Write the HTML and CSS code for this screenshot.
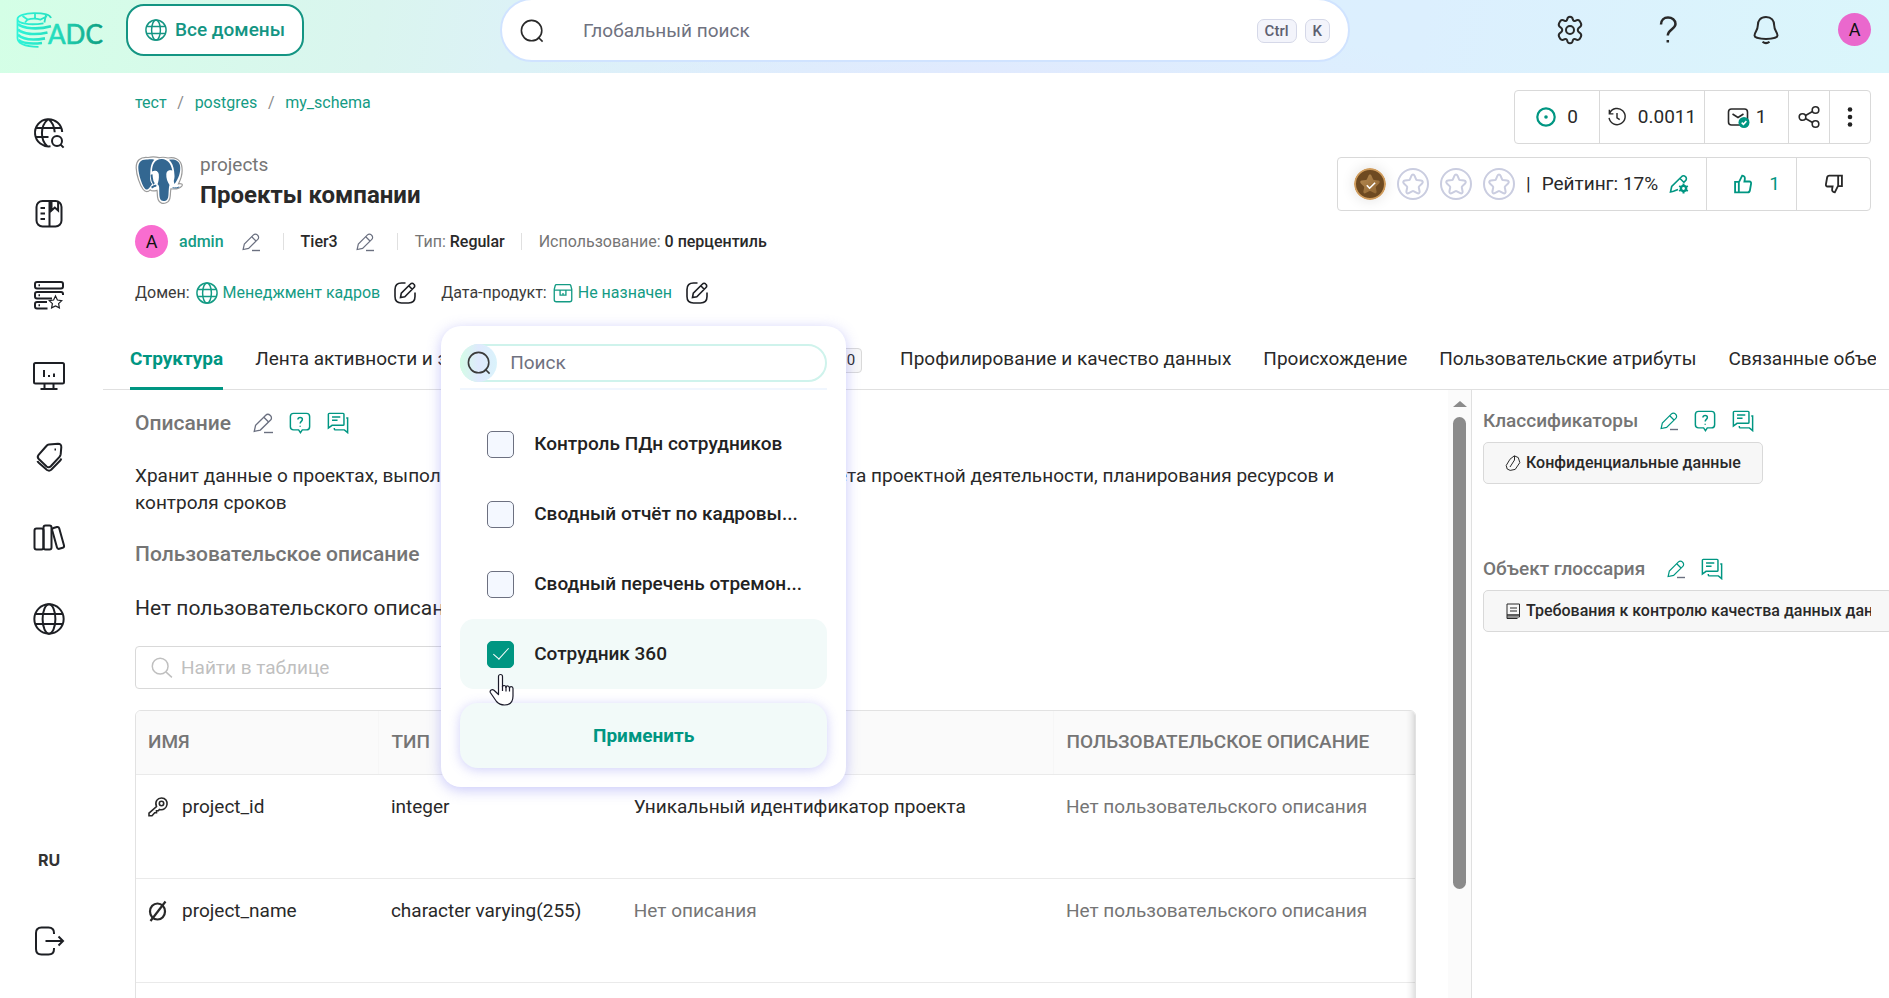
FILE: index.html
```html
<!DOCTYPE html>
<html lang="ru">
<head>
<meta charset="utf-8">
<title>Проекты компании</title>
<link rel="stylesheet" href="styles.css">
</head>
<body>
<svg class="sprite" aria-hidden="true">
  <symbol id="i-globe" viewBox="0 0 24 24"><circle cx="12" cy="12" r="11"/><ellipse cx="12" cy="12" rx="4.8" ry="11"/><path d="M1.8 8.2h20.4M1.8 15.8h20.4"/></symbol>
  <symbol id="i-search" viewBox="0 0 24 24"><circle cx="11.6" cy="11.6" r="10.2"/><path d="M18 18l4.6 4.6"/></symbol>
  <symbol id="i-find" viewBox="0 0 24 24"><circle cx="10" cy="10" r="8.600"/><path d="M16.200 16.200l6.600 6"/></symbol>
  <symbol id="i-pencil" viewBox="0 0 24 24"><path d="M1.5 22l1.6-7.2L15.3 2.6a3.6 3.6 0 0 1 5.1 0l.7.7a3.6 3.6 0 0 1 0 5.1L8.8 20.5z"/><path d="M13 5l5.700 5.700"/></symbol>
  <symbol id="i-edit" viewBox="0 0 24 24"><path d="M12.5 2H8.5Q2 2 2 8.500v7q0 6.500 6.500 6.500h7q6.500 0 6.500-6.500v-4"/><path d="M7.500 16.500l.8-4.300L17.500 3a2.200 2.200 0 0 1 3.200 0l.3.3a2.200 2.200 0 0 1 0 3.200L11.800 15.700zM16 5l3.200 3.200"/></symbol>
  <symbol id="i-ask" viewBox="0 0 24 24"><path d="M5 1.500h14q3.500 0 3.500 3.500v11q0 3.500-3.500 3.500h-4.500L12.500 22.500l-2-3H5q-3.500 0-3.500-3.500V5q0-3.500 3.500-3.500z"/><path d="M9.700 8.200c.2-3 4.900-3 4.900 0 0 2-2.400 2-2.400 4.300M12.200 15v1.200"/></symbol>
  <symbol id="i-chat" viewBox="0 0 24 24"><path d="M1.500 17.500V2.500q0-1 1-1h15q1 0 1 1v11q0 1-1 1h-12zM5.500 5.500h9M5.500 9h6M21 6.500h1.500v16l-3.500-3H9q-1 0-1-1v-1"/></symbol>
  <symbol id="i-box" viewBox="0 0 24 24"><path d="M4 2h16q1 0 1.300 1l1.200 4.500V20q0 2.500-2.500 2.500H4Q1.500 22.500 1.500 20V7.500L2.700 3Q3 2 4 2zM1.500 8.500h21M8.500 8.500v6h7v-6M12 12v2.500"/></symbol>
  <symbol id="i-star" viewBox="0 0 32 32"><path stroke-linejoin="round" d="M16 6.500c.8 0 1.200.5 1.500 1.200l1.600 3.600c.2.500.5.700 1 .8l4 .5c1.700.2 2.200 1.700 1 2.900l-3 2.900c-.3.300-.4.700-.3 1.100l.8 4c.2 1.500-1 2.400-2.300 1.600l-3.400-1.800q-.9-.4-1.800 0l-3.400 1.800c-1.300.8-2.500-.1-2.300-1.600l.8-4c.1-.4 0-.8-.3-1.100l-3-2.900c-1.200-1.200-.7-2.700 1-2.900l4-.5c.5-.1.800-.3 1-.8l1.600-3.600c.3-.7.700-1.200 1.500-1.200z"/></symbol>
  <symbol id="i-medal" viewBox="0 0 32 32"><circle cx="16" cy="16" r="15"/><use href="#i-star"/></symbol>
  <symbol id="i-thumb" viewBox="0 0 24 24"><path d="M2.500 9.500h4.500v12.500h-4.500zM7 10l4-8c2.600.3 3.600 2 3.200 4.200l-.5 2.800h6q2.300.2 2 2.500l-1.400 8q-.4 2.500-2.800 2.500H7"/></symbol>
</svg>

<header class="topbar">
  <a class="logo" href="#" aria-label="ADC">
    <svg class="logo-art" viewBox="0 0 88 37">
      <defs><linearGradient id="lg" x1="0" y1="0" x2="88" y2="0" gradientUnits="userSpaceOnUse"><stop offset="0" stop-color="#2ff5da"/><stop offset=".45" stop-color="#25dcbc"/><stop offset="1" stop-color="#0d9b7e"/></linearGradient></defs>
      <g fill="none" stroke="url(#lg)" stroke-width="1.800">
        <path d="M1.500 7C1.500 3.500 9 1.200 18 1.200c9.500 0 16 1.800 17 4.800M1.500 7v19c0 5 6 8.500 21 8.800M1.500 7c0 4.500 12 6.500 26 4.300"/>
        <path d="M6.500 4l5 3.600M19 1v6M30 2.500l-1.600 8M11.500 7.600c4-1.200 9-1.200 13 0L31 4.200M11.500 7.600L9 10.500"/>
      </g>
      <g fill="none" stroke="url(#lg)" stroke-width="2.600">
        <path d="M2 12c5 4.800 20 5.800 33 2.200M2 17.500c5 4.800 17 5.800 29.500 3M2 22.800c5 4.800 16 5.600 27 3.600M2.500 28c5 3.800 13 4.200 23.500 3"/>
      </g>
      <text x="32" y="32" font-family="Lato, sans-serif" font-size="26" fill="url(#lg)" stroke="url(#lg)" stroke-width=".6">ADC</text>
    </svg>
  </a>
  <button class="domains"><svg class="ic i22"><use href="#i-globe"/></svg>Все домены</button>
  <label class="global-search">
    <svg class="ic i24"><use href="#i-search"/></svg>
    <input type="search" placeholder="Глобальный поиск" aria-label="Глобальный поиск">
    <kbd>Ctrl</kbd><kbd>K</kbd>
  </label>
  <nav class="top-actions">
    <button aria-label="Настройки"><svg class="ic i30" viewBox="0 0 30 30"><circle cx="15" cy="15" r="4"/><path d="M12.200 4.500q.3-2.800 2.800-2.800t2.800 2.800q.6 2 2.600 1.300 2.800-1.600 4.300.3l1.300 2.300q.9 2.200-1.300 3.800-2 1.300-2 2.800t2 2.800q2.200 1.600 1.300 3.800l-1.300 2.300q-1.500 1.900-4.300.3-2-.7-2.600 1.300-.3 2.800-2.800 2.800t-2.800-2.800q-.6-2-2.600-1.300-2.800 1.600-4.300-.3L4 21.600q-.9-2.200 1.300-3.800 2-1.300 2-2.800t-2-2.800Q3.100 10.600 4 8.400l1.300-2.300q1.500-1.900 4.300-.3 2 .7 2.600-1.300z"/></svg></button>
    <button aria-label="Справка"><svg class="ic i30 help" viewBox="0 0 30 30"><path d="M8 9.500C8 5 11 2.500 15 2.500s7.500 2.500 7.500 6.500c0 5-7.700 5.500-7.700 11.500M14.800 25v2.600"/></svg></button>
    <button aria-label="Уведомления"><svg class="ic i30" viewBox="0 0 30 30"><path d="M15 2c-5.500 0-8.200 3.700-8.200 8.500 0 5-3.300 6.500-3.300 10 0 2 5 3.400 11.500 3.400s11.500-1.400 11.500-3.400c0-3.500-3.300-5-3.300-10C23.200 5.700 20.500 2 15 2zM11.500 26.700q3.500 2.800 7 0"/></svg></button>
    <button class="avatar" aria-label="Профиль">A</button>
  </nav>
</header>

<div class="shell">
  <nav class="sidebar">
    <a href="#" aria-label="Обзор"><svg class="ic i32" viewBox="0 0 32 32"><path d="M17.500 29.300A13.600 13.600 0 1 1 29.200 15M14.500 29.500C7 23 7 9 15 2.200M15.500 2.200c4 3 6 8 6.200 13M14 29.500h1M3 11h25.500M2.500 20h13"/><circle cx="24" cy="24" r="5"/><path d="M27.600 27.600l3 3"/></svg></a>
    <a href="#" aria-label="Каталог"><svg class="ic i32" viewBox="0 0 32 32"><rect x="3.500" y="3" width="25" height="25.500" rx="6"/><path d="M16.500 3v25M7.500 10h4.500M7.500 15.500h4.500M7.500 21h4.500M18.500 3.500v9l3.300-3 3.300 3V4"/></svg></a>
    <a href="#" aria-label="Качество"><svg class="ic i32" viewBox="0 0 32 32"><rect x="2" y="3" width="28" height="6.500" rx="2"/><path d="M19 19.500H4q-2 0-2-2v-2.500q0-2 2-2h24q2 0 2 2v1M14.500 29.500H4q-2 0-2-2V25q0-2 2-2h10M5.500 6.300h1.500M5.500 16.300h1.500M5.500 26.300h1.500"/><path class="thin" d="M22.500 17l1.900 4 4.300.6-3.100 3 .8 4.300-3.900-2-3.900 2 .8-4.300-3.100-3 4.300-.6z"/></svg></a>
    <a href="#" aria-label="Дашборды"><svg class="ic i32" viewBox="0 0 32 32"><rect x="1" y="3" width="30" height="20.500" rx="1.500"/><path d="M11.500 23.500v5M20.500 23.500v5M7.500 29h17M11 10v7M16 15v2M21 13.500v3.500"/></svg></a>
    <a href="#" aria-label="Теги"><svg class="ic i32" viewBox="0 0 32 32"><path d="M16 3.500l9-.8q3.500 0 3.300 3.500l-.6 7q-.2 1.500-1.200 2.600l-8.700 9.400q-2 2-4.200.2L5.800 18q-2-2-.2-4.200L13.400 5q1.100-1.300 2.600-1.500zM21.500 8.500h1.500M4.500 20q.3 1 1.500 2l8 7q2.200 1.400 4.200-.2l8.800-9q1-1 1.200-2.300"/></svg></a>
    <a href="#" aria-label="Глоссарий"><svg class="ic i32" viewBox="0 0 32 32"><rect x="1.500" y="6.500" width="9" height="21" rx="2"/><rect x="10.500" y="3.500" width="8" height="24" rx="2"/><path d="M19.200 8.200q-.4-1.700 1.300-2.200l3.400-1q1.800-.4 2.300 1.300L31 23.500q.4 1.800-1.300 2.300l-3.400 1q-1.800.4-2.300-1.300z"/></svg></a>
    <a href="#" aria-label="Домены"><svg class="ic i32 fine"><use href="#i-globe"/></svg></a>
    <button class="lang">RU</button>
    <a href="#" aria-label="Выход"><svg class="ic i32" viewBox="0 0 32 32"><path d="M21 9V8q0-5.500-5.500-5.500H8.500Q3 2.500 3 8v16q0 5.500 5.500 5.500h7Q21 29.500 21 24v-1M12.500 16H30M25.500 11.500L30 16l-4.500 4.500"/></svg></a>
  </nav>

  <main class="main">
    <section class="head">
      <div class="info">
        <nav class="crumbs"><a href="#">тест</a><i>/</i><a href="#">postgres</a><i>/</i><a href="#">my_schema</a></nav>
        <div class="title-row">
          <svg class="pg" viewBox="0 0 48 48">
            <path d="M13 1.500C5 .5 1 5 1.200 12c.2 7 3.500 17 7 21.500 2.200 2.800 5 2.500 7 .3 1 1 3.600 1.400 6.800.5.600 3-.2 6 1.200 9.500 1.300 3.500 4.800 4.200 8 3 2.700-1 3.800-3.200 4-6.500.3-2.600.2-5 .7-7.500 4.600.6 9.100-.5 11.100-3 1-1.600-.5-2.400-3.500-2C46.500 22 48 15 46.500 9 45 3 39 .8 33 2c-5-1.500-7-.5-9-.3-3-.8-7-1-11-.2z" fill="#fff" stroke="#9b9b9b" stroke-width="1.200"/>
            <path d="M13 3.500C6.500 2.700 3.200 6 3.300 12c.2 6 3.200 16 6.300 20.300 1.500 2 3.200 1.300 5-.9l2.600-3.300C14.500 25.500 15 20.500 15.300 17c.2-6 1-10 4-13.200-2-.5-4-.6-6.300-.3z" fill="#336791"/>
            <path d="M27 3c-6.500-.3-10 5-10 12.500 3-1.700 6.500-.5 6.800 2.800.4 4-.3 7.500-1.300 10 2 1 1.800 4.500 1.800 8 0 6 1 9.300 5.200 8.700 3.500-.5 3.800-3.500 4-6.700.3-4 .2-7 1-9.300-2-3-3.500-7-3.200-11 .2-3 2.500-4.500 6-3.500C36 7.500 32.500 3.300 27 3z" fill="#336791"/>
            <path d="M34 3.700c5.500-.9 10 .8 11 5.800 1.100 6-1.500 13.500-5.500 18.500-.7-2-1-3-.2-5.200.6-2.600-.1-5-.2-7.500C38.700 10.700 37 6.300 34 3.700z" fill="#336791"/>
            <path d="M16.500 18.500c.5 3.500 0 6.500 2.500 9.500M16.500 31.500c2-1 3-2 4.800-1.600" fill="none" stroke="#336791" stroke-width="2"/>
            <path d="M37.500 31.800c3 .3 5.200 0 6.700-.9" stroke="#336791" stroke-width="1" fill="none"/>
            <path d="M20 15.300l2 .6M34 15.300l1.800-.3" stroke="#fff" stroke-width="1.200"/>
          </svg>
          <div><p class="tech">projects</p><h1>Проекты компании</h1></div>
        </div>
        <div class="meta">
          <span class="avatar pink">A</span><a class="owner" href="#">admin</a>
          <button class="pen" aria-label="Изменить владельца"><svg class="ic i18 grey"><use href="#i-pencil"/><path class="uline" d="M10 17.500h8"/></svg></button>
          <span class="sep"></span><b class="tier">Tier3</b>
          <button class="pen" aria-label="Изменить уровень"><svg class="ic i18 grey"><use href="#i-pencil"/><path class="uline" d="M10 17.500h8"/></svg></button>
          <span class="sep"></span><span class="stat">Тип: <b>Regular</b></span>
          <span class="sep"></span><span class="stat">Использование: <b>0 перцентиль</b></span>
        </div>
        <div class="assign">
          <div class="field">Домен:<a href="#"><svg class="ic i22"><use href="#i-globe"/></svg>Менеджмент кадров</a><button aria-label="Изменить домен"><svg class="ic i24"><use href="#i-edit"/></svg></button></div>
          <div class="field">Дата-продукт:<a href="#"><svg class="ic i20"><use href="#i-box"/></svg>Не назначен</a><button aria-label="Изменить дата-продукт"><svg class="ic i24"><use href="#i-edit"/></svg></button>
            <form class="popup">
              <label class="popup-search"><span class="lens"><svg class="ic i24"><use href="#i-search"/></svg></span><input type="search" placeholder="Поиск" aria-label="Поиск"></label>
              <div class="options">
                <label class="option"><input type="checkbox">Контроль ПДн сотрудников</label>
                <label class="option"><input type="checkbox">Сводный отчёт по кадровы...</label>
                <label class="option"><input type="checkbox">Сводный перечень отремон...</label>
                <label class="option on"><input type="checkbox" checked>Сотрудник 360</label>
              </div>
              <button type="button" class="apply">Применить</button>
              <svg class="hand" viewBox="0 0 26 33"><path d="M10.500 21.500V3.500a2 2 0 0 1 4 0V14c0-2.200 3.500-2 3.500.5 0-2.300 3.500-2 3.500.7 0-2.200 3.500-2.200 3.500.3v7.500c0 6-3 9-8.500 9-4 0-6-1.200-8-3.500l-6.200-9c-.8-2 1.700-3.800 3.700-2.300z" fill="#fff" stroke="#1b1b2a" stroke-width="1.200" stroke-linejoin="round"/><path d="M14.500 13v5M18 13.500v5M21.500 14.500v4" stroke="#1b1b2a" stroke-width="1.200"/></svg>
            </form>
          </div>
        </div>
      </div>
      <div class="actions">
        <div class="group">
          <button class="c1"><svg class="ic i20 green bold" viewBox="0 0 20 20"><circle cx="10" cy="10" r="8.700"/><circle class="dot" cx="10" cy="10" r="1.800"/></svg>0</button>
          <button class="c2"><svg class="ic i18" viewBox="0 0 20 20"><path d="M2 5.500A9 9 0 1 1 1.200 11M1.500 2v4.500H6M10 5.500V11l3 2"/></svg>0.0011</button>
          <button class="c1 tight"><svg class="ic i22" viewBox="0 0 22 22"><rect x="1.500" y="3" width="19" height="16" rx="3"/><path d="M5.500 8l5.500 3.500L16.500 8"/><circle cx="17" cy="16.500" r="5.500" fill="#009682" stroke="none"/><path d="M14.700 16.700l1.700 1.600 3-3.200" stroke="#fff"/></svg>1</button>
          <button class="c3" aria-label="Поделиться"><svg class="ic i22" viewBox="0 0 22 22"><circle cx="4.500" cy="11" r="3.300"/><circle cx="17.500" cy="4" r="3.300"/><circle cx="17.500" cy="18" r="3.300"/><path d="M7.500 9.500l7-4M7.500 12.500l7 4"/></svg></button>
          <button class="c3" aria-label="Ещё"><svg class="i22" viewBox="0 0 22 22" fill="#222"><circle cx="11" cy="3.500" r="2.300"/><circle cx="11" cy="11" r="2.300"/><circle cx="11" cy="18.500" r="2.300"/></svg></button>
        </div>
        <div class="group">
          <div class="rating">
            <svg class="medal i32 earned" viewBox="0 0 32 32"><defs><linearGradient id="st" x1="0" y1="0" x2="1" y2="1"><stop offset="0" stop-color="#b58a52"/><stop offset="1" stop-color="#8f6430"/></linearGradient></defs><circle cx="16" cy="16" r="15" fill="#6e4a21" stroke="#cf9c5d" stroke-width="2"/><g fill="url(#st)" stroke="none"><use href="#i-star"/></g><path d="M12.800 17.200l2.800 3 5.500-5.500" fill="none" stroke="#fff" stroke-width="1.600"/></svg>
            <svg class="medal i32"><use href="#i-medal"/></svg>
            <svg class="medal i32"><use href="#i-medal"/></svg>
            <svg class="medal i32"><use href="#i-medal"/></svg>
            <span>|</span><span>Рейтинг: 17%</span>
            <svg class="ic i20 green" viewBox="0 0 20 20"><path d="M9 15.500l-4.500 1.800L1.500 18l1.200-5.500L12.500 2.700a2.700 2.700 0 0 1 4 0 2.700 2.700 0 0 1 0 4l-2 2M11 4.500l4 4"/><circle cx="14.500" cy="14.500" r="2.600" stroke-width="2.400"/><path stroke-width="2" d="M14.500 9.500v2M14.500 17.500v2M10.200 12l1.700 1M17.100 16l1.700 1M10.200 17l1.700-1M17.100 13l1.700-1"/></svg>
          </div>
          <button class="like"><svg class="ic i20 bold"><use href="#i-thumb"/></svg>1</button>
          <button class="dislike" aria-label="Не нравится"><svg class="ic i20 bold"><use href="#i-thumb" transform="rotate(180 10 10)"/></svg></button>
        </div>
      </div>
    </section>

    <nav class="tabs">
      <a class="tab active" href="#">Структура</a>
      <a class="tab" href="#">Лента активности и задачи <span class="count">0</span></a>
      <a class="tab" href="#">Примеры данных</a>
      <a class="tab queries" href="#">Запросы <span class="count">0</span></a>
      <a class="tab" href="#">Профилирование и качество данных</a>
      <a class="tab" href="#">Происхождение</a>
      <a class="tab" href="#">Пользовательские атрибуты</a>
      <a class="tab" href="#">Связанные объекты</a>
    </nav>

    <div class="body">
      <section class="content">
        <div class="sect"><h2>Описание</h2>
          <button aria-label="Изменить описание"><svg class="ic i20 grey"><use href="#i-pencil"/><path class="uline" d="M11 19.500h9"/></svg></button>
          <button aria-label="Запросить описание"><svg class="ic i22 green"><use href="#i-ask"/></svg></button>
          <button aria-label="Обсуждение"><svg class="ic i22 green"><use href="#i-chat"/></svg></button></div>
        <p class="text">Хранит данные о проектах, выполняемых в компании. Используется для расчёта проектной деятельности, планирования ресурсов и контроля сроков</p>
        <div class="sect"><h2>Пользовательское описание</h2><button aria-label="Изменить пользовательское описание"><svg class="ic i20 grey"><use href="#i-pencil"/><path class="uline" d="M11 19.500h9"/></svg></button></div>
        <p class="empty">Нет пользовательского описания</p>
        <label class="finder"><svg class="ic i22"><use href="#i-find"/></svg><input type="search" placeholder="Найти в таблице" aria-label="Найти в таблице"></label>
        <div class="table-wrap">
          <table>
            <colgroup><col class="w-name"><col class="w-type"><col class="w-desc"><col class="w-user"></colgroup>
            <thead><tr><th>ИМЯ</th><th>ТИП</th><th>ОПИСАНИЕ</th><th>ПОЛЬЗОВАТЕЛЬСКОЕ ОПИСАНИЕ</th></tr></thead>
            <tbody>
              <tr><td><span class="cell"><svg class="ic i20" viewBox="0 0 20 20"><path d="M8.500 9.500C6.500 4.500 9.500 1 13.500 1S19.500 4 19 7.500c-.5 3.500-3.500 6-7.500 5l-1.200 1.300H8.500v2H6.700L4 18.800H1v-2.700z"/><circle cx="13.500" cy="6.500" r="2.200"/></svg>project_id</span></td><td>integer</td><td>Уникальный идентификатор проекта</td><td class="muted">Нет пользовательского описания</td></tr>
              <tr><td><span class="cell"><svg class="ic i20 bold" viewBox="0 0 20 20"><ellipse cx="9.500" cy="10.500" rx="7.500" ry="8"/><path d="M2.500 20L17.500.5"/></svg>project_name</span></td><td>character varying(255)</td><td class="muted">Нет описания</td><td class="muted">Нет пользовательского описания</td></tr>
              <tr><td></td><td></td><td></td><td></td></tr>
            </tbody>
          </table>
        </div>
      </section>
      <div class="scroll" aria-hidden="true"><span class="up"></span><span class="knob"></span></div>
      <aside class="side">
        <div class="sect"><h3>Классификаторы</h3>
          <button aria-label="Изменить классификаторы"><svg class="ic i18 green"><use href="#i-pencil"/><path class="uline" d="M10 17.500h8"/></svg></button>
          <button aria-label="Запросить классификаторы"><svg class="ic i22"><use href="#i-ask"/></svg></button>
          <button aria-label="Обсуждение"><svg class="ic i22"><use href="#i-chat"/></svg></button></div>
        <a class="tag" href="#"><svg class="ic i16" viewBox="0 0 16 16"><path d="M1.200 10.500L5 4.200 9.300.8l4 1.800 1.500 5-4.600 6.800-5 1-3-1.400zM9.500 1v4M5 12l4.500-7"/></svg>Конфиденциальные данные</a>
        <div class="sect second"><h3>Объект глоссария</h3>
          <button aria-label="Изменить глоссарий"><svg class="ic i18 green"><use href="#i-pencil"/><path class="uline" d="M10 17.500h8"/></svg></button>
          <button aria-label="Обсуждение"><svg class="ic i22"><use href="#i-chat"/></svg></button></div>
        <a class="tag long" href="#"><svg class="ic i16" viewBox="0 0 16 16"><path d="M2 1h12.500v13H2zM2 14v1.500h10.500M5 5h7M5 8h7"/><path d="M2 12h12" stroke-width="1.500"/></svg><span>Требования к контролю качества данных данных</span></a>
      </aside>
    </div>
  </main>
</div>
</body>
</html>
```
FILE: styles.css
```css
* { box-sizing: border-box; }
body {
  margin: 0;
  height: 100vh;
  display: flex;
  flex-direction: column;
  overflow: hidden;
  font-family: Roboto, "Liberation Sans", sans-serif;
  font-size: 19px;
  line-height: 24px;
  color: #292929;
  background: #fff;
}
h1, h2, h3, p { margin: 0; }
a { color: #149b84; text-decoration: none; }
button { font: inherit; color: inherit; background: none; border: 0; padding: 0; cursor: pointer; display: flex; align-items: center; justify-content: center; }
input { font: inherit; color: inherit; border: 0; outline: 0; background: none; padding: 0; min-width: 0; }
b { font-weight: 500; }
.sprite { position: absolute; width: 0; height: 0; }
.ic { fill: none; stroke: currentColor; stroke-width: 1.6; flex: none; overflow: visible; }
.bold { stroke-width: 2.2; }
.thin { stroke-width: 1.2; }
.i16 { width: 16px; height: 16px; stroke-width: 1; }
.i18 { width: 18px; height: 18px; }
.i20 { width: 20px; height: 20px; }
.i22 { width: 22px; height: 22px; }
.i24 { width: 24px; height: 24px; }
.i30 { width: 30px; height: 30px; stroke-width: 2; }
.i32 { width: 32px; height: 32px; stroke-width: 2; }
.help { stroke-width: 2.5; }
.fine { stroke-width: 1.5; }
.green { color: #009682; }
.grey { color: #6b7080; }
.uline { stroke: #6b7080; stroke-width: 1.4; }
.dot { fill: currentColor; stroke: none; }

.topbar {
  flex: none;
  display: flex;
  align-items: flex-start;
  padding-bottom: 11px;
  background: radial-gradient(ellipse 460px 60px at 52% 110%, #e1e9fe 0%, rgba(225, 233, 254, 0) 100%), linear-gradient(100deg, #d4ffe6 0%, #daf5ef 20%, #dcf2f6 27%, #dceffd 50%, #dceffe 75%, #daf6fb 100%);
}
.logo { margin: 12px 22px 0 16px; display: flex; }
.logo-art { width: 88px; height: 37px; overflow: visible; }
.domains { margin-top: 4px; width: 178px; height: 52px; gap: 8px; border: 2px solid #149583; border-radius: 18px; background: #fff; color: #149583; font-weight: 500; }
.global-search { margin-left: 196px; margin-top: -2px; flex: 1; height: 64px; display: flex; align-items: center; gap: 8px; padding: 2px 18px 0 18px; background: #fff; border: 2px solid #d0e3ff; border-radius: 32px; }
.global-search input { flex: 1; margin-left: 31px; }
.global-search input::placeholder, .popup-search input::placeholder { color: #6f7280; opacity: 1; }
kbd { font: 500 15px/22px Roboto, sans-serif; color: #5d6070; padding: 0 7px; border: 1px solid #d5d8e8; border-radius: 7px; background: #f3f4fb; }
.top-actions { flex: none; width: 539px; padding: 13px 18px 0 0; display: flex; justify-content: flex-end; gap: 68px; align-items: center; }
.avatar { width: 33px; height: 33px; flex: none; border-radius: 50%; background: #ea68cd; color: #111; font-size: 18px; }
.top-actions .avatar { margin-left: -11px; }
.avatar.pink { background: #f96dd0; display: flex; align-items: center; justify-content: center; }

.shell { flex: 1; min-height: 0; display: flex; }
.sidebar { flex: 0 0 98px; display: flex; flex-direction: column; align-items: center; gap: 49px; padding: 44px 0 41px; }
.sidebar a { color: #1d1f24; display: flex; }
.lang { margin-top: auto; height: 32px; font: 700 16px/32px Inter, sans-serif; color: #333; }
.main { flex: 1; min-width: 0; display: flex; flex-direction: column; }

.head { flex: none; display: flex; justify-content: space-between; padding: 17px 18px 25px 37px; }
.crumbs { display: flex; font-size: 16px; padding-top: 1px; }
.crumbs i { font-style: normal; color: #8a8a8a; width: 28px; text-align: center; }
.title-row { display: flex; gap: 17px; margin-top: 38px; }
.pg { width: 48px; height: 48px; margin-top: 3px; }
.tech { color: #757575; }
h1 { font-size: 24px; line-height: 36px; font-weight: 700; }
.meta { display: flex; align-items: center; margin-top: 12px; font-size: 16px; }
.owner { margin-left: 11px; font-weight: 500; }
.pen { margin: 0 23px 0 18px; }
.sep { width: 1px; height: 17px; background: #e0e0e0; margin-right: 17px; }
.stat { color: #757575; margin-right: 16px; }
.stat b { color: #292929; }
.assign { display: flex; gap: 24px; margin-top: 23px; font-size: 16px; }
.field { position: relative; display: flex; align-items: center; color: #3b3b3b; }
.field a { display: flex; align-items: center; gap: 5px; margin: 0 13px 0 6px; }
.field button { color: #1d1f24; }

.actions { display: flex; flex-direction: column; align-items: flex-end; gap: 13px; }
.group { display: flex; height: 54px; border: 1px solid #d9d9d9; border-radius: 4px; }
.group > * + * { border-left: 1px solid #d9d9d9; }
.c1 { width: 84px; gap: 11px; }
.c1.tight { gap: 7px; }
.c2 { width: 105px; gap: 12px; }
.c3 { width: 41px; }
.rating { display: flex; align-items: center; width: 368px; gap: 11px; padding-left: 16px; }
.medal { flex: none; fill: none; stroke: #cacde0; }
.medal.earned { border-radius: 50%; box-shadow: 0 0 14px rgba(0, 0, 0, .12); }
.like { width: 90px; gap: 16px; padding-left: 10px; color: #009682; }
.dislike { width: 74px; }

.popup { position: absolute; z-index: 2; top: 45px; left: 0; width: 405px; padding: 18px 19px 19px; border-radius: 20px; background: #fff; font-size: 19px; box-shadow: 0 3px 14px rgba(110, 110, 240, .38); }
.popup-search { display: flex; height: 38px; border: 2px solid #cff3ec; border-radius: 19px; margin-bottom: 6px; }
.lens { flex: none; width: 37px; height: 38px; margin: -2px 13px 0 -2px; border-radius: 50%; background: linear-gradient(90deg, #d4fde6, #dfe9fd 50%, #daf3fb); display: flex; align-items: center; justify-content: center; }
.popup-search input { flex: 1; }
.options { border-top: 2px solid #f0f6fe; padding-top: 19px; }
.option { display: flex; align-items: center; gap: 20px; height: 70px; padding-left: 27px; border-radius: 14px; font-weight: 500; color: #222; }
.option.on { background: #f2faf9; }
.option input { appearance: none; flex: none; width: 27px; height: 27px; margin: 0; border: 1px solid #6c7080; border-radius: 5px; background: #f4f8ff; display: flex; align-items: center; justify-content: center; }
.option input:checked { background: #009682; border-color: #009682; }
.option input:checked::before { content: ""; width: 7px; height: 14px; margin-bottom: 5px; border: solid #fff; border-width: 0 1px 1px 0; transform: rotate(42deg); }
.popup .apply { width: 100%; height: 65px; margin-top: 14px; border-radius: 18px; background: #f2faf9; color: #009682; font-weight: 700; box-shadow: 0 2px 12px rgba(110, 110, 240, .32); }
.hand { position: absolute; left: 47px; top: 347px; width: 26px; height: 33px; }

.tabs { flex: none; margin-left: 5px; margin-right: 13px; padding-left: 27px; display: flex; gap: 32px; overflow: hidden; }
.tab { flex: none; color: #292929; line-height: 24px; padding: 17px 0 14px; border-bottom: 3px solid transparent; white-space: nowrap; }
.tab.active { color: #009682; font-weight: 700; border-color: #009682; }
.queries { margin: 0 6px 0 7px; }
.count { display: inline-block; font-size: 15px; line-height: 23px; padding: 0 6px; border: 1px solid #d9d9d9; border-radius: 4px; background: #f7f7f7; }

.body { flex: 1; min-height: 0; display: flex; position: relative; }
.body::before { content: ""; position: absolute; top: -1px; left: 5px; right: 0; border-top: 1px solid #e0e0e0; z-index: -1; }
.content { flex: 1; min-width: 0; padding: 20px 32px 0 37px; overflow: hidden; }
.sect { display: flex; align-items: center; height: 24px; gap: 16px; }
.sect h2, .sect h3 { color: #757575; font-weight: 500; margin-right: 6px; }
.sect h2 { font-size: 21px; }
.sect h3 { font-size: 19px; }
.text { line-height: 27px; margin: 26px 60px 25px 0; }
.empty { font-size: 21px; line-height: 28px; margin: 27px 0 24px; }
.content .sect { height: 26px; }
.finder { display: flex; align-items: center; gap: 8px; height: 43px; width: 500px; padding-left: 15px; border: 1px solid #d9d9d9; border-radius: 4px; color: #bfbfbf; }
.finder input { flex: 1; }
.finder input::placeholder { color: #bfbfbf; opacity: 1; }
.table-wrap { position: relative; margin-top: 21px; border: 1px solid #e2e2e2; border-radius: 6px 6px 0 0; overflow: hidden; }
.table-wrap::after { content: ""; position: absolute; inset: 0; box-shadow: inset -9px 0 8px -8px rgba(0, 0, 0, .2); }
table { width: 100%; table-layout: fixed; border-collapse: collapse; }
.w-name, .w-type { width: 19%; }
.w-desc { width: 33.8%; }
th { text-align: left; font-weight: 500; color: #757575; background: #fafafa; height: 63px; padding: 0 12px; border-bottom: 1px solid #eaeaea; border-right: 1px solid #f6f6f6; }
td { height: 104px; padding: 20px 12px; vertical-align: top; border-bottom: 1px solid #eaeaea; }
.cell { display: flex; align-items: center; gap: 14px; }
.muted { color: #757575; }

.scroll { flex: 0 0 24px; display: flex; flex-direction: column; align-items: center; padding: 11px 0 0; background: #fbfbfb; border-right: 1px solid #e0e0e0; }
.up { border: 7px solid transparent; border-top: 0; border-bottom: 6px solid #8b8b8b; margin-bottom: 10px; }
.knob { width: 13px; height: 79%; border-radius: 7px; background: #8b8b8b; }
.side { flex: 0 0 417px; padding: 19px 0 0 11px; color: #009682; overflow: hidden; }
.tag { display: inline-flex; align-items: center; gap: 5px; height: 42px; margin-top: 9px; padding: 0 21px; border: 1px solid #d9d9d9; border-radius: 5px; background: #f7f7f7; color: #292929; font-size: 16px; font-weight: 500; white-space: nowrap; }
.second { margin-top: 73px; }
.tag.long { display: flex; margin-right: -4px; }
.tag.long span { overflow: hidden; }
```
